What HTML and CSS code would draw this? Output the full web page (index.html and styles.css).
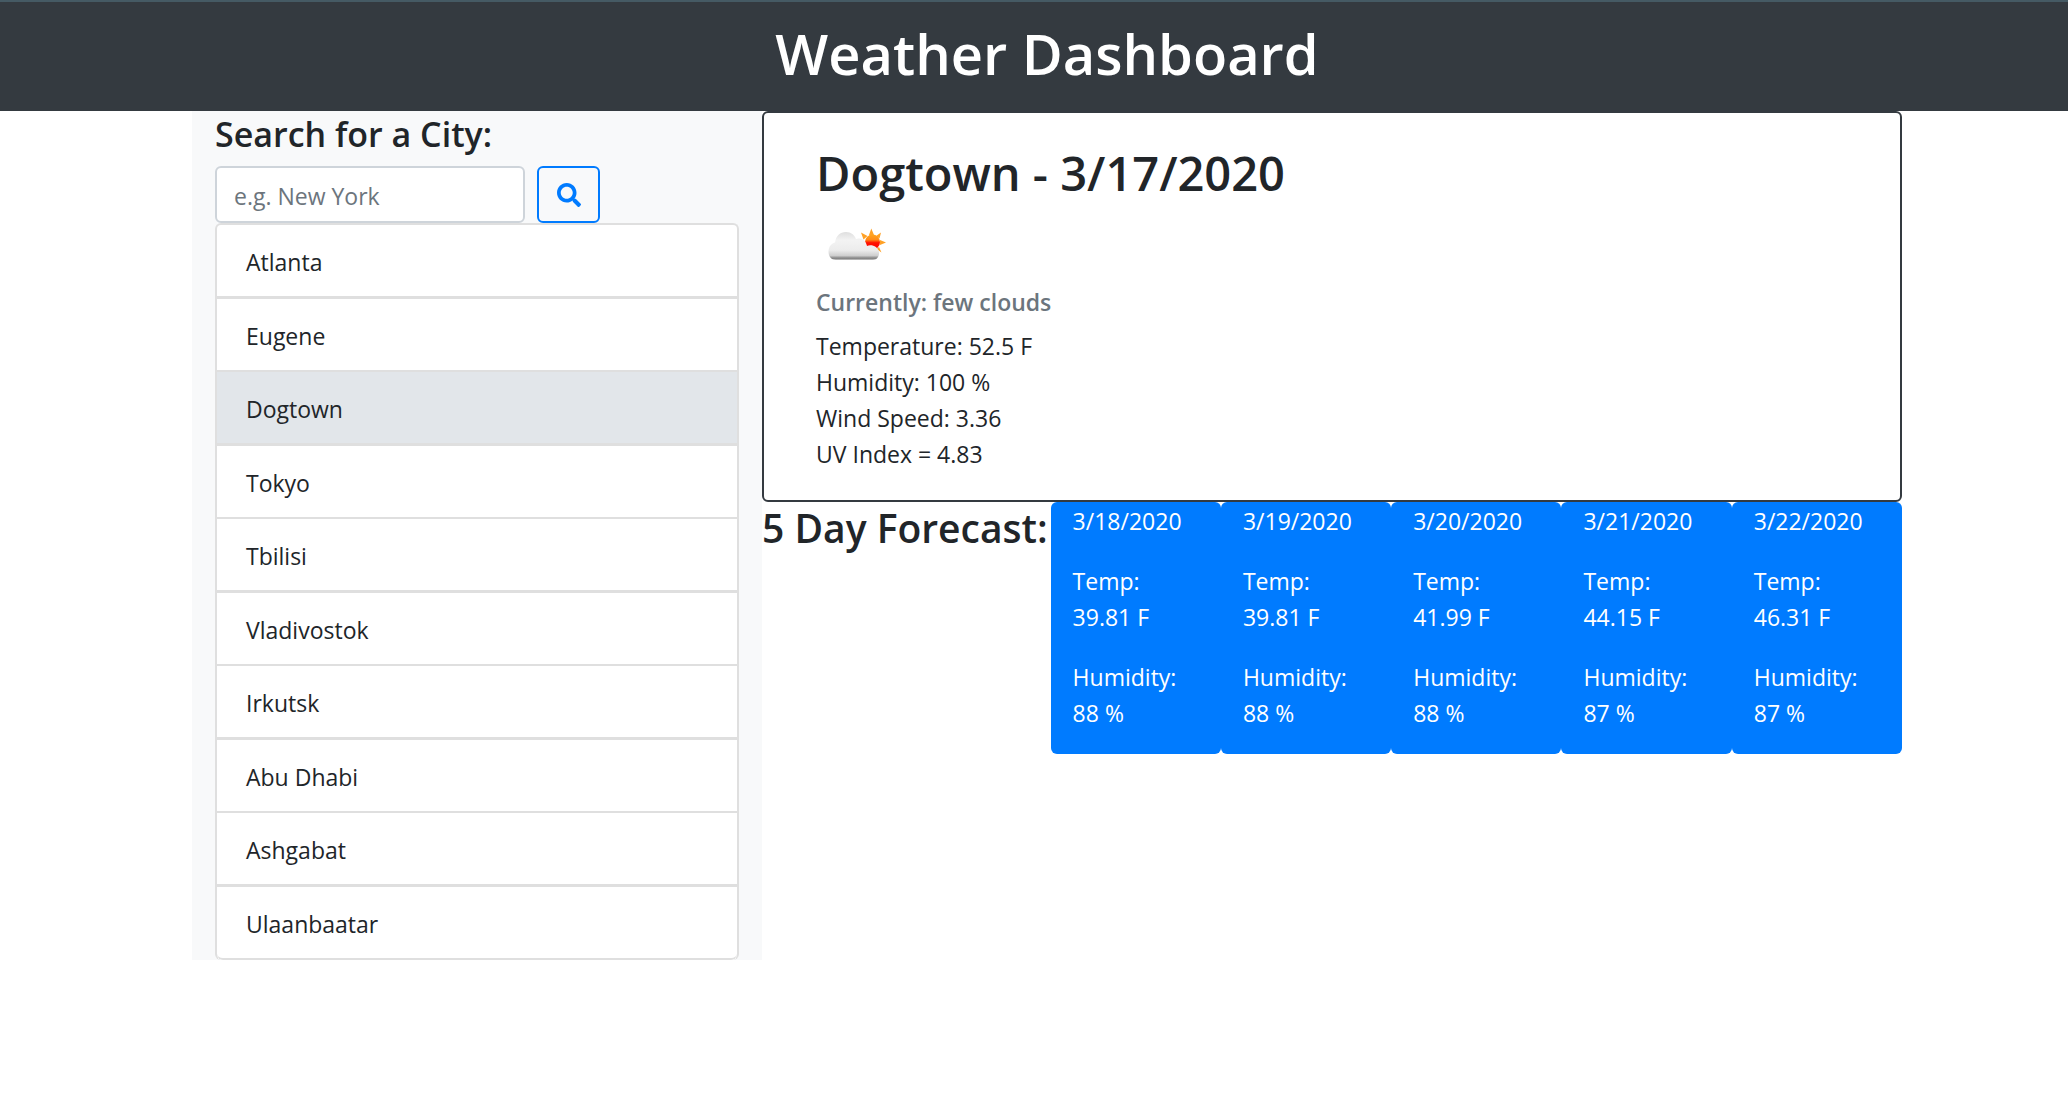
FILE: index.html
```html
<!DOCTYPE html>
<html lang="en">
<head>
  <meta charset="utf-8">
  <meta name="viewport" content="width=device-width, initial-scale=1">
  <title>Weather Dashboard</title>
  <link rel="stylesheet" href="styles.css">
</head>
<body>
  <header class="page-header">
    <h1>Weather Dashboard</h1>
  </header>
  <main class="container">
    <aside class="sidebar">
      <form class="search">
        <label class="search-title" for="city">Search for a City:</label>
        <div class="search-row">
          <input class="search-input" id="city" type="text" placeholder="e.g. New York">
          <button class="search-button" type="submit" aria-label="Search">
            <svg viewBox="0 0 512 512" width="24" height="24" aria-hidden="true"><path fill="currentColor" d="M505 442.700L405.300 343c-4.500-4.500-10.600-7-17-7H372c27.600-35.300 44-79.700 44-128C416 93.100 322.900 0 208 0S0 93.100 0 208s93.100 208 208 208c48.300 0 92.700-16.400 128-44v16.300c0 6.400 2.500 12.500 7 17l99.700 99.700c9.400 9.400 24.600 9.400 33.900 0l28.300-28.300c9.400-9.400 9.400-24.600.1-34zM208 336c-70.700 0-128-57.200-128-128 0-70.700 57.200-128 128-128 70.700 0 128 57.200 128 128 0 70.700-57.200 128-128 128z"/></svg>
          </button>
        </div>
      </form>
      <ul class="city-list">
        <li>Atlanta</li>
        <li>Eugene</li>
        <li class="active">Dogtown</li>
        <li>Tokyo</li>
        <li>Tbilisi</li>
        <li>Vladivostok</li>
        <li>Irkutsk</li>
        <li>Abu Dhabi</li>
        <li>Ashgabat</li>
        <li>Ulaanbaatar</li>
      </ul>
    </aside>
    <div class="content">
      <section class="current">
        <h2>Dogtown - 3/17/2020</h2>
        <svg class="weather-icon" viewBox="0 0 75 75" width="75" height="75" role="img" aria-label="few clouds">
          <defs>
            <linearGradient id="cloud" x1="0" y1="0" x2="0" y2="1">
              <stop offset="0" stop-color="#dedede"/>
              <stop offset=".3" stop-color="#f3f3f3"/>
              <stop offset=".65" stop-color="#ececec"/>
              <stop offset=".84" stop-color="#cfcfcf"/>
              <stop offset=".94" stop-color="#808080"/>
              <stop offset="1" stop-color="#c8c8c8"/>
            </linearGradient>
            <linearGradient id="sun" x1="0" y1="0" x2="0" y2="1">
              <stop offset="0" stop-color="#ffa51e"/>
              <stop offset=".35" stop-color="#ff8a18"/>
              <stop offset=".55" stop-color="#ff1200"/>
              <stop offset="1" stop-color="#f00"/>
            </linearGradient>
          </defs>
          <g fill="#ffa126">
            <path d="M53 28L55.300 21.500L58 28zM60 29l5-3.500-1.500 6zM64 33l6 2.500-6 2.500zM63 40l2.500 5.500-5-3.500zM51.500 29l-6.500-3.500 2.500 7z"/>
          </g>
          <circle cx="56.500" cy="35" r="7.500" fill="url(#sun)"/>
          <path fill="url(#cloud)" d="M20 53C15 53 12.500 49 12.500 45C12.500 40 15 36.500 19 35.500C20 29 24 25 30 25C35 25 38.500 28 40 32C45 30 50 33 51 39C56 37 62 40 63 45C63.500 49 61 53 57 53z"/>
        </svg>
        <h3>Currently: few clouds</h3>
        <p>Temperature: 52.5 F</p>
        <p>Humidity: 100 %</p>
        <p>Wind Speed: 3.36</p>
        <p>UV Index = 4.83</p>
      </section>
      <section class="forecast">
        <h2>5 Day Forecast:</h2>
        <article class="day"><p>3/18/2020</p><p>Temp:<br>39.81 F</p><p>Humidity:<br>88 %</p></article>
        <article class="day"><p>3/19/2020</p><p>Temp:<br>39.81 F</p><p>Humidity:<br>88 %</p></article>
        <article class="day"><p>3/20/2020</p><p>Temp:<br>41.99 F</p><p>Humidity:<br>88 %</p></article>
        <article class="day"><p>3/21/2020</p><p>Temp:<br>44.15 F</p><p>Humidity:<br>87 %</p></article>
        <article class="day"><p>3/22/2020</p><p>Temp:<br>46.31 F</p><p>Humidity:<br>87 %</p></article>
      </section>
    </div>
  </main>
</body>
</html>
```
FILE: styles.css
```css
* {
  box-sizing: border-box;
}

body {
  margin: 0;
  background: #fff;
  color: #212529;
  font: 23px/36px "Open Sans", "Noto Sans", sans-serif;
}

h1, h2, h3, p, ul {
  margin: 0;
  padding: 0;
}

h1, h2, h3, .search-title {
  font-weight: 600;
}

.page-header {
  padding: 15px 0 22px 26px;
  border-top: 2px solid #455a64;
  background: #343a40;
  color: #fff;
  text-align: center;
}

.page-header h1 {
  font-size: 56px;
  line-height: 72px;
}

.container {
  display: grid;
  grid-template-columns: 1fr 2fr;
  align-items: start;
  max-width: 1736px;
  margin: 0 auto;
  padding-left: 26px;
}

.sidebar {
  padding: 0 23px;
  background: #f8f9fa;
}

.search-title {
  display: block;
  padding: 1px 0 10px;
  font-size: 34px;
  line-height: 44px;
}

.search-row {
  display: flex;
  gap: 12px;
}

.search-input {
  width: 310px;
  height: 57px;
  padding: 2px 17px 0;
  border: 2px solid #ced4da;
  border-radius: 6px;
  background: #fff;
  color: #495057;
  font: inherit;
}

.search-input::placeholder {
  color: #6c757d;
  opacity: 1;
}

.search-button {
  display: flex;
  align-items: center;
  justify-content: center;
  width: 63px;
  height: 57px;
  padding: 0;
  border: 2px solid #007bff;
  border-radius: 6px;
  background: transparent;
  color: #007bff;
}

.city-list {
  border: 2px solid #dfdfdf;
  border-bottom: 0;
  border-radius: 6px;
  background: #fff;
  list-style: none;
  overflow: hidden;
}

.city-list li {
  padding: 19px 29px 16px;
  border-bottom: 2px solid #dfdfdf;
}

.city-list li:nth-child(odd) {
  border-bottom-width: 3px;
}

.city-list li:last-child {
  border-bottom-width: 2px;
  border-radius: 0 0 6px 6px;
}

.city-list .active {
  background: #e2e6ea;
}

.current {
  padding: 30px 52px 28px;
  border: 2px solid #343a40;
  border-radius: 6px;
}

.current h2 {
  font-size: 47px;
  line-height: 60px;
}

.weather-icon {
  display: block;
  margin: 4px 0 2px;
}

.current h3 {
  margin-bottom: 8px;
  color: #6c757d;
  font-size: 23px;
  line-height: 36px;
}

.forecast {
  display: flex;
  align-items: flex-start;
}

.forecast h2 {
  flex: none;
  padding-right: 3px;
  font-size: 39px;
  line-height: 52px;
}

.day {
  flex: 1;
  padding: 1px 22px 23px;
  border-radius: 6px;
  background: #007bff;
  color: #fff;
}

.day p + p {
  margin-top: 24px;
}
```
